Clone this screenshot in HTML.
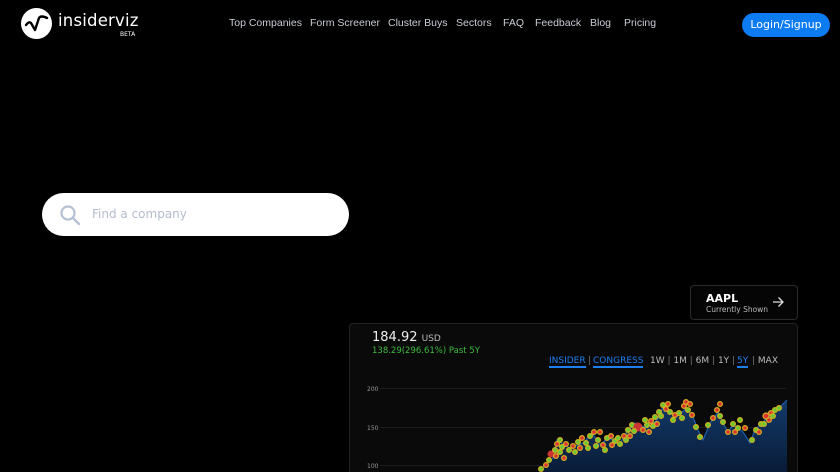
<!DOCTYPE html>
<html style="overflow:hidden;width:840px;height:472px"><head><meta charset="utf-8"><style>
*{margin:0;padding:0;box-sizing:border-box}
body{width:840px;height:472px;background:#000;overflow:hidden;position:relative;font-family:"DejaVu Sans","Liberation Sans",sans-serif;color:#fff}
.nav{position:absolute;top:17px;font-size:10.5px;color:#c8ccd4;font-family:"Liberation Sans",sans-serif}
.btn{position:absolute;left:742px;top:13px;width:88px;height:24px;border-radius:12px;background:#0d7cf2;color:#fff;font-size:11px;text-align:center;line-height:24px}
.search{position:absolute;left:42px;top:193px;width:307px;height:43px;border-radius:22px;background:#fff}
.aapl{position:absolute;left:690px;top:285px;width:108px;height:35px;border:1px solid #2a2a2a;border-radius:4px;background:#050505}
.card{position:absolute;left:349px;top:323px;width:449px;height:149px;border:1px solid #222;border-bottom:none;border-radius:4px 4px 0 0;background:#0a0a0a}
.tf{position:absolute;top:356px;font-size:9px;color:#bbb}
</style></head><body>
<svg style="position:absolute;left:21px;top:8px" width="31" height="31" viewBox="0 0 31 31"><circle cx="15.5" cy="15.5" r="15.5" fill="#fff"/><path d="M5 17 Q8 13 10 15 L14 22 L18 10 Q20 7 26 10" stroke="#000" stroke-width="2.4" fill="none" stroke-linecap="round" stroke-linejoin="round"/></svg>
<div style="position:absolute;left:58px;top:11px;font-size:16.5px;letter-spacing:0.2px;color:#fff">insiderviz</div>
<div style="position:absolute;left:120px;top:31px;font-size:6px;color:#fff">BETA</div>
<div class="nav" style="left:229px">Top Companies</div>
<div class="nav" style="left:310px">Form Screener</div>
<div class="nav" style="left:388px">Cluster Buys</div>
<div class="nav" style="left:456px">Sectors</div>
<div class="nav" style="left:503px">FAQ</div>
<div class="nav" style="left:535px">Feedback</div>
<div class="nav" style="left:590px">Blog</div>
<div class="nav" style="left:624px">Pricing</div>
<div class="btn">Login/Signup</div>
<div class="search">
<svg style="position:absolute;left:17px;top:11px" width="22" height="22" viewBox="0 0 22 22"><circle cx="9" cy="9" r="6.5" stroke="#b4c0d4" stroke-width="2.2" fill="none"/><path d="M14 14 L20 20" stroke="#b4c0d4" stroke-width="2.4" stroke-linecap="round"/></svg>
<div style="position:absolute;left:50px;top:14px;font-size:12px;color:#b4bccc">Find a company</div>
</div>
<div class="aapl">
<div style="position:absolute;left:15px;top:6px;font-size:11px;font-weight:bold;color:#fff">AAPL</div>
<div style="position:absolute;left:15px;top:19px;font-size:7.5px;color:#bbb">Currently Shown</div>
<svg style="position:absolute;left:81px;top:10px" width="12" height="12" viewBox="0 0 12 12"><path d="M1 6 H11 M6.5 1.5 L11 6 L6.5 10.5" stroke="#ddd" stroke-width="1.3" fill="none"/></svg>
</div>
<div class="card"></div>
<div style="position:absolute;left:372px;top:330px;font-size:13px;color:#eee">184.92 <span style="font-size:9px;color:#bbb">USD</span></div>
<div style="position:absolute;left:372px;top:346px;font-size:8.5px;color:#3dbb3d">138.29(296.61%) Past 5Y</div>
<div class="tf" style="left:549px;color:#1f7ef0;border-bottom:2px solid #1f7ef0">INSIDER</div>
<div class="tf" style="left:588px;color:#777">|</div>
<div class="tf" style="left:593px;color:#1f7ef0;border-bottom:2px solid #1f7ef0">CONGRESS</div>
<div class="tf" style="left:650px">1W <span style="color:#777">|</span> 1M <span style="color:#777">|</span> 6M <span style="color:#777">|</span> 1Y <span style="color:#777">|</span></div>
<div class="tf" style="left:737px;color:#1f7ef0;border-bottom:2px solid #1f7ef0">5Y</div>
<div class="tf" style="left:752px"><span style="color:#777">|</span> MAX</div>
<svg style="position:absolute;left:0;top:0" width="840" height="472">
<defs><linearGradient id="g" x1="0" y1="0" x2="0" y2="1"><stop offset="0" stop-color="#123a6a"/><stop offset="1" stop-color="#0a1c38"/></linearGradient></defs>
<g stroke="#1c1c1c" stroke-width="1"><line x1="380" y1="388.5" x2="786" y2="388.5"/><line x1="380" y1="427.5" x2="786" y2="427.5"/><line x1="380" y1="465.5" x2="786" y2="465.5"/></g>
<g font-size="6" fill="#999" font-family="DejaVu Sans"><text x="367" y="391">200</text><text x="367" y="430">150</text><text x="367" y="468">100</text></g>
<path d="M540 472 L540 470 553 458 557 440 570 448 583 443 592 433 600 445 608 438 620 443 627 432 635 423 647 428 657 420 663 407 670 413 678 415 687 408 693 417 698 430 703 440 710 423 718 412 723 423 728 432 733 425 737 427 743 432 750 443 755 430 760 425 768 417 777 410 787 400 L787 472Z" fill="url(#g)"/>
<path d="M540 470 553 458 557 440 570 448 583 443 592 433 600 445 608 438 620 443 627 432 635 423 647 428 657 420 663 407 670 413 678 415 687 408 693 417 698 430 703 440 710 423 718 412 723 423 728 432 733 425 737 427 743 432 750 443 755 430 760 425 768 417 777 410 787 400" fill="none" stroke="#1d5fb0" stroke-width="1.2"/>
<g stroke="#d4b020" stroke-width="1.2">
<circle cx="541" cy="469" r="2.4" fill="#6c3"/><circle cx="546" cy="465" r="2.4" fill="#d33"/><circle cx="549" cy="460" r="2.4" fill="#6c3"/><circle cx="551" cy="454" r="3.5" fill="#c33" stroke="none"/><circle cx="555" cy="450" r="2.4" fill="#6c3"/><circle cx="557" cy="444" r="2.4" fill="#d33"/><circle cx="560" cy="440" r="2.4" fill="#6c3"/><circle cx="556" cy="456" r="2.4" fill="#d33"/><circle cx="562" cy="447" r="2.4" fill="#6c3"/><circle cx="566" cy="444" r="2.4" fill="#d33"/><circle cx="569" cy="450" r="2.4" fill="#6c3"/><circle cx="573" cy="446" r="2.4" fill="#d33"/><circle cx="578" cy="442" r="2.4" fill="#6c3"/><circle cx="582" cy="438" r="2.4" fill="#d33"/><circle cx="586" cy="443" r="2.4" fill="#6c3"/><circle cx="590" cy="436" r="2.4" fill="#6c3"/><circle cx="594" cy="432" r="2.4" fill="#d33"/><circle cx="598" cy="440" r="2.4" fill="#6c3"/><circle cx="603" cy="445" r="2.4" fill="#d33"/><circle cx="607" cy="438" r="2.4" fill="#6c3"/><circle cx="611" cy="436" r="2.4" fill="#d33"/><circle cx="615" cy="441" r="2.4" fill="#6c3"/><circle cx="620" cy="444" r="2.4" fill="#6c3"/><circle cx="624" cy="436" r="2.4" fill="#d33"/><circle cx="628" cy="430" r="2.4" fill="#6c3"/><circle cx="632" cy="425" r="2.4" fill="#6c3"/><circle cx="638" cy="427" r="4.5" fill="#c33" stroke="none"/><circle cx="643" cy="430" r="2.4" fill="#d33"/><circle cx="647" cy="425" r="2.4" fill="#6c3"/><circle cx="651" cy="421" r="2.4" fill="#d33"/><circle cx="655" cy="417" r="2.4" fill="#6c3"/><circle cx="659" cy="412" r="2.4" fill="#6c3"/><circle cx="663" cy="405" r="2.4" fill="#6c3"/><circle cx="666" cy="409" r="2.4" fill="#d33"/><circle cx="670" cy="412" r="2.4" fill="#6c3"/><circle cx="675" cy="415" r="2.4" fill="#d33"/><circle cx="679" cy="413" r="2.4" fill="#6c3"/><circle cx="684" cy="406" r="2.4" fill="#d33"/><circle cx="688" cy="410" r="2.4" fill="#6c3"/><circle cx="692" cy="415" r="2.4" fill="#d33"/><circle cx="696" cy="427" r="2.4" fill="#6c3"/><circle cx="700" cy="437" r="2.4" fill="#6c3"/><circle cx="708" cy="425" r="2.4" fill="#6c3"/><circle cx="713" cy="418" r="2.4" fill="#d33"/><circle cx="717" cy="410" r="2.4" fill="#d33"/><circle cx="723" cy="422" r="2.4" fill="#6c3"/><circle cx="728" cy="432" r="2.4" fill="#d33"/><circle cx="733" cy="424" r="2.4" fill="#6c3"/><circle cx="738" cy="428" r="2.4" fill="#6c3"/><circle cx="752" cy="440" r="2.4" fill="#6c3"/><circle cx="756" cy="430" r="2.4" fill="#6c3"/><circle cx="761" cy="424" r="2.4" fill="#6c3"/><circle cx="766" cy="416" r="3" fill="#d33"/><circle cx="771" cy="413" r="2.4" fill="#d33"/><circle cx="775" cy="410" r="2.4" fill="#6c3"/><circle cx="779" cy="408" r="2.4" fill="#6c3"/>
<circle cx="560" cy="452" r="2.4" fill="#6c3"/><circle cx="564" cy="458" r="2.4" fill="#d33"/><circle cx="575" cy="452" r="2.4" fill="#6c3"/><circle cx="580" cy="448" r="2.4" fill="#d33"/><circle cx="588" cy="448" r="2.4" fill="#6c3"/><circle cx="596" cy="446" r="2.4" fill="#6c3"/><circle cx="600" cy="432" r="2.4" fill="#d33"/><circle cx="605" cy="450" r="2.4" fill="#6c3"/><circle cx="612" cy="445" r="2.4" fill="#d33"/><circle cx="618" cy="438" r="2.4" fill="#6c3"/><circle cx="626" cy="440" r="2.4" fill="#6c3"/><circle cx="630" cy="436" r="2.4" fill="#d33"/><circle cx="634" cy="431" r="2.4" fill="#6c3"/><circle cx="645" cy="420" r="2.4" fill="#6c3"/><circle cx="649" cy="432" r="2.4" fill="#d33"/><circle cx="653" cy="426" r="2.4" fill="#6c3"/><circle cx="657" cy="424" r="2.4" fill="#d33"/><circle cx="661" cy="416" r="2.4" fill="#6c3"/><circle cx="668" cy="404" r="2.4" fill="#d33"/><circle cx="673" cy="420" r="2.4" fill="#6c3"/><circle cx="682" cy="418" r="2.4" fill="#6c3"/><circle cx="686" cy="402" r="2.4" fill="#d33"/><circle cx="690" cy="404" r="2.4" fill="#d33"/><circle cx="720" cy="404" r="2.4" fill="#d33"/><circle cx="720" cy="416" r="2.4" fill="#6c3"/><circle cx="735" cy="432" r="2.4" fill="#d33"/><circle cx="740" cy="420" r="2.4" fill="#6c3"/><circle cx="745" cy="428" r="2.4" fill="#d33"/><circle cx="759" cy="432" r="2.4" fill="#d33"/><circle cx="764" cy="424" r="2.4" fill="#6c3"/><circle cx="769" cy="420" r="2.4" fill="#d33"/><circle cx="773" cy="416" r="2.4" fill="#6c3"/>
</g>
</svg>
</body></html>
